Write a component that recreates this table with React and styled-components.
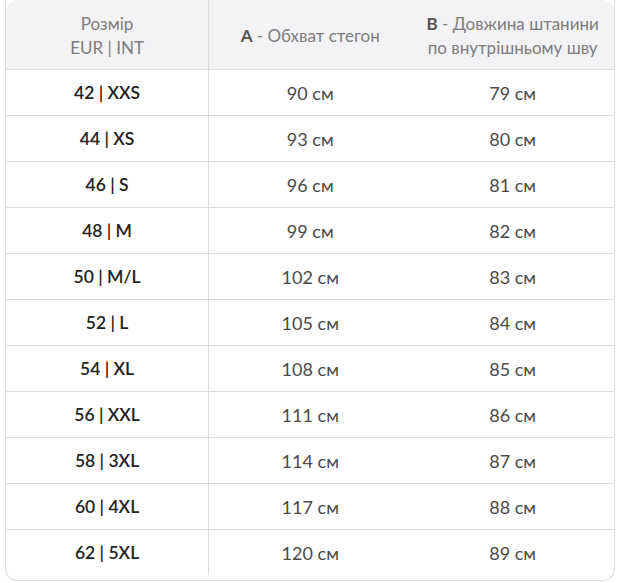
import React from "react";
import styled, { createGlobalStyle } from "styled-components";

const GlobalStyle = createGlobalStyle`
    body {
        margin: 0;
        background: #fff;
        font-family: Lato, "Open Sans", sans-serif;
    }
`;

const Wrapper = styled.div`
    margin: 0 5px;
    width: 608px;
    border: 1px solid #dcdcdc;
    border-top: none;
    border-radius: 0 0 12px 12px;
    padding-bottom: 5px;
    overflow: hidden;
`;

const Table = styled.table`
    width: 100%;
    border-collapse: collapse;
    table-layout: fixed;
`;

const Head = styled.thead`
    background: #f3f2f4;
`;

const HeadCell = styled.th`
    height: 67px;
    padding: 2px 6px 0;
    font-weight: 400;
    font-size: 17px;
    line-height: 24px;
    color: #7d7d7d;
    text-align: center;
    vertical-align: middle;
    border-bottom: 1px solid #dcdcdc;
    border-left: ${(p) => (p.$divider ? "1px solid #dcdcdc" : "none")};
    border-top-left-radius: ${(p) => (p.$first ? "12px" : "0")};
    border-top-right-radius: ${(p) => (p.$last ? "12px" : "0")};
`;

const Letter = styled.b`
    font-weight: 700;
    color: #555;
`;

const Row = styled.tr`
    & + & td {
        border-top: 1px solid #dcdcdc;
    }
`;

const Cell = styled.td`
    height: 45px;
    padding: 0;
    text-align: center;
    vertical-align: middle;
    font-size: ${(p) => (p.$size ? "17.5px" : "18px")};
    color: ${(p) => (p.$size ? "#222" : "#4a4a4a")};
    font-weight: ${(p) => (p.$size ? 600 : 400)};
    border-left: ${(p) => (p.$divider ? "1px solid #dcdcdc" : "none")};
`;

const rows = [
    ["42 | XXS", 90, 79],
    ["44 | XS", 93, 80],
    ["46 | S", 96, 81],
    ["48 | M", 99, 82],
    ["50 | M/L", 102, 83],
    ["52 | L", 105, 84],
    ["54 | XL", 108, 85],
    ["56 | XXL", 111, 86],
    ["58 | 3XL", 114, 87],
    ["60 | 4XL", 117, 88],
    ["62 | 5XL", 120, 89],
];

const App = () => {
    return (
        <>
            <GlobalStyle />
            <Wrapper>
                <Table>
                    <Head>
                        <tr>
                            <HeadCell $first>
                                Розмір
                                <br />
                                EUR | INT
                            </HeadCell>
                            <HeadCell $divider>
                                <Letter>A</Letter> - Обхват стегон
                            </HeadCell>
                            <HeadCell $last>
                                <Letter>B</Letter> - Довжина штанини
                                <br />
                                по внутрішньому шву
                            </HeadCell>
                        </tr>
                    </Head>
                    <tbody>
                        {rows.map(([size, hips, inseam]) => (
                            <Row key={size}>
                                <Cell $size>{size}</Cell>
                                <Cell $divider>{hips} см</Cell>
                                <Cell>{inseam} см</Cell>
                            </Row>
                        ))}
                    </tbody>
                </Table>
            </Wrapper>
        </>
    );
};

export default App;
